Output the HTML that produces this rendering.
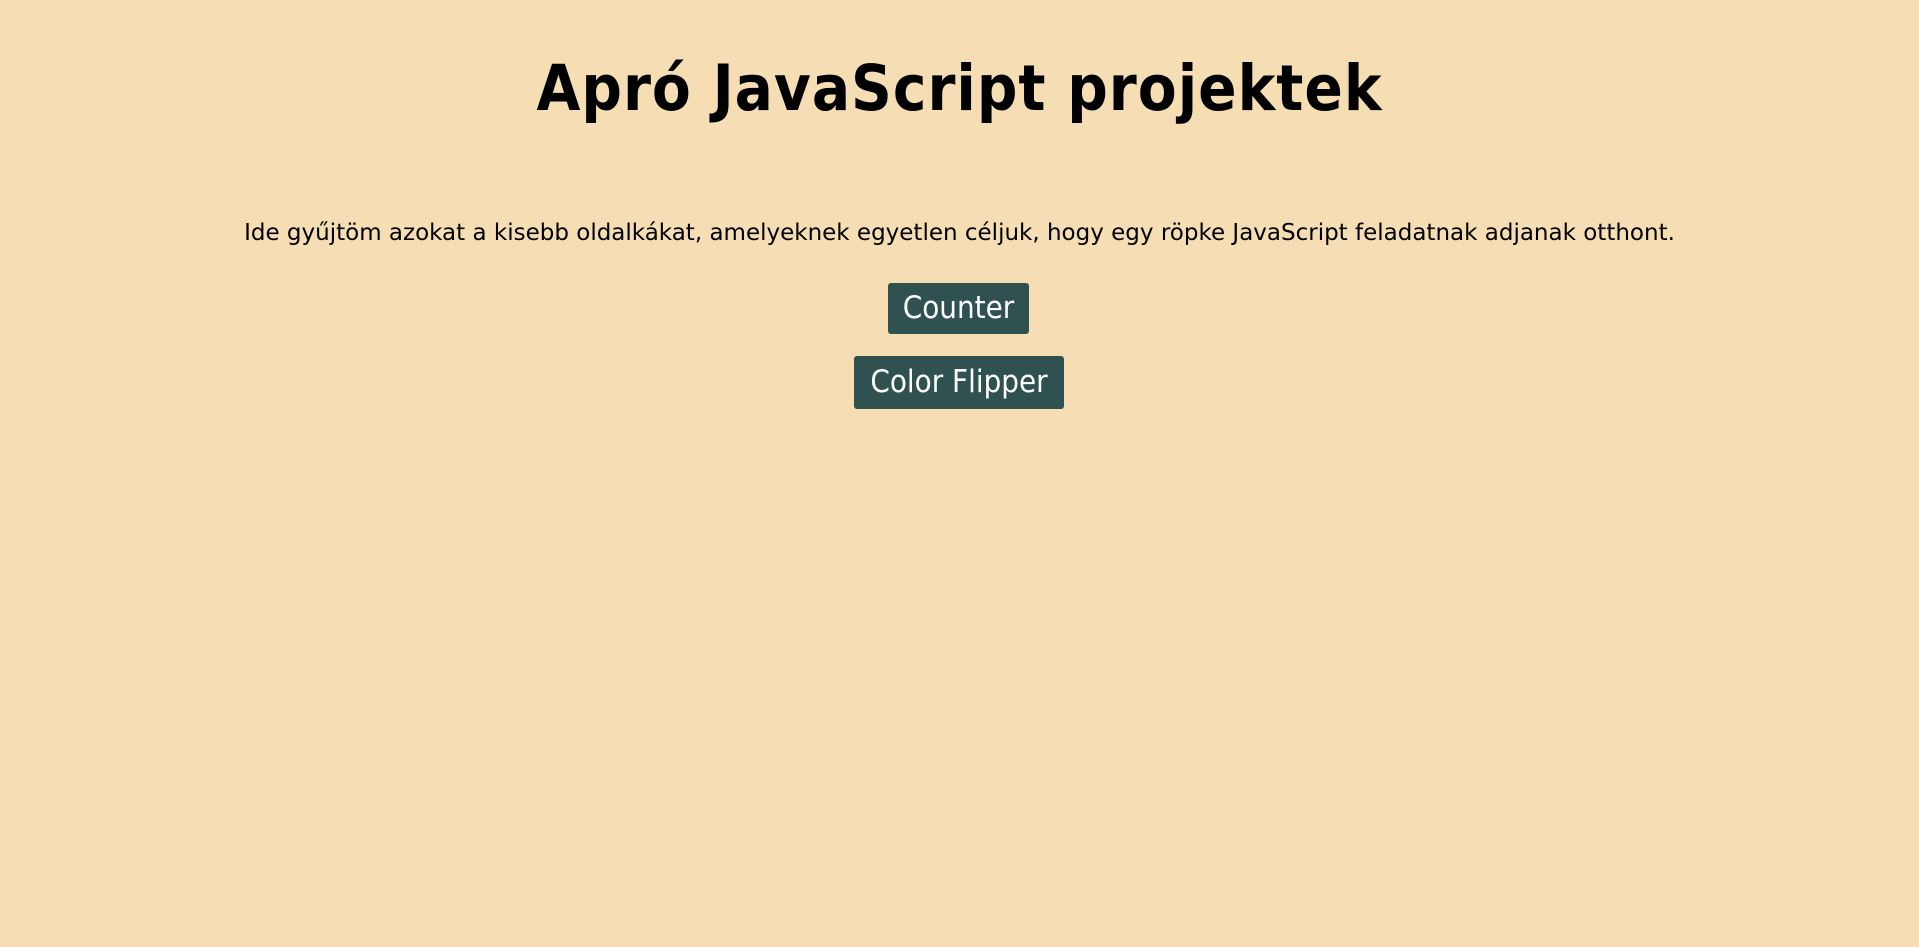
<!DOCTYPE html>
<html><head><meta charset="utf-8"><style>
html,body{margin:0;padding:0;background:#f5deb3;width:1919px;height:947px;overflow:hidden;font-family:"DejaVu Sans","Liberation Sans",sans-serif;color:#000}
h1{position:absolute;left:0;width:1919px;top:44px;margin:0;text-align:center;font-size:63px;line-height:90px;font-weight:bold;font-family:"DejaVu Sans Condensed","DejaVu Sans",sans-serif;font-stretch:condensed;letter-spacing:1px}
p{position:absolute;left:0;width:1919px;top:217px;margin:0;text-align:center;font-size:23px;line-height:32px;font-family:"DejaVu Sans",sans-serif}
.b{position:absolute;background:#2f5150;color:#fff;border-radius:3px;text-align:center;font-size:31px;font-family:"DejaVu Sans Condensed","DejaVu Sans",sans-serif;font-stretch:condensed}
</style></head><body>
<h1>Apró JavaScript projektek</h1>
<p>Ide gyűjtöm azokat a kisebb oldalkákat, amelyeknek egyetlen céljuk, hogy egy röpke JavaScript feladatnak adjanak otthont.</p>
<div class="b" style="left:888px;top:283px;width:141px;height:51px;line-height:51px">Counter</div>
<div class="b" style="left:854px;top:356px;width:210px;height:53px;line-height:53px">Color Flipper</div>
</body></html>
